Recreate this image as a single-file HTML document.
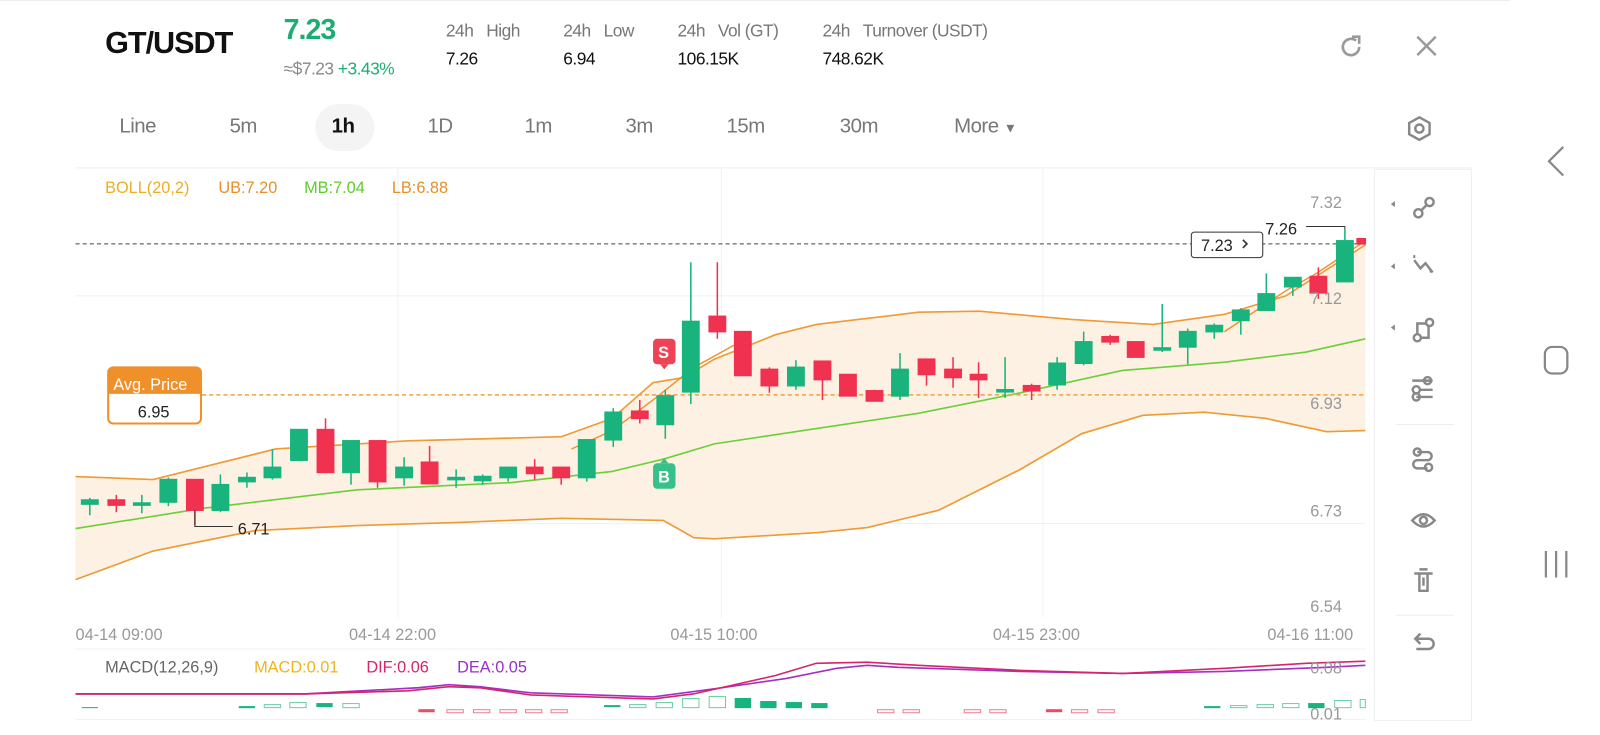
<!DOCTYPE html>
<html><head><meta charset="utf-8"><style>
body{margin:0;width:1600px;height:720px;background:#fff;font-family:"Liberation Sans",sans-serif;overflow:hidden;position:relative}
#w{position:absolute;left:0;top:0;width:1568px;height:706px;transform:scale(1.0204);transform-origin:0 0}
.a{position:absolute;white-space:nowrap}
.lbl{color:#777;font-size:17px;letter-spacing:-0.5px}
.val{color:#111;font-size:17px;letter-spacing:-0.5px}
.tf{position:absolute;top:113px;font-size:20px;color:#777;letter-spacing:-0.5px}
</style></head><body><div id="w">
<div style="position:absolute;left:0;top:0;width:1480px;height:1px;background:#eee"></div>
<div class="a" style="left:103px;top:26px;font-size:30px;font-weight:bold;color:#111;letter-spacing:-1px">GT/USDT</div>
<div class="a" style="left:278px;top:13px;font-size:28px;font-weight:bold;color:#1bae73;letter-spacing:-1px">7.23</div>
<div class="a" style="left:278px;top:58px;font-size:17px;color:#888;letter-spacing:-0.5px">≈$7.23 <span style="color:#1bae73">+3.43%</span></div>
<div class="a lbl" style="left:437px;top:21px">24h&nbsp;&nbsp;&nbsp;High</div>
<div class="a val" style="left:437px;top:48px">7.26</div>
<div class="a lbl" style="left:552px;top:21px">24h&nbsp;&nbsp;&nbsp;Low</div>
<div class="a val" style="left:552px;top:48px">6.94</div>
<div class="a lbl" style="left:664px;top:21px">24h&nbsp;&nbsp;&nbsp;Vol (GT)</div>
<div class="a val" style="left:664px;top:48px">106.15K</div>
<div class="a lbl" style="left:806px;top:21px">24h&nbsp;&nbsp;&nbsp;Turnover (USDT)</div>
<div class="a val" style="left:806px;top:48px">748.62K</div>
<svg class="a" style="left:1310px;top:32px" width="28" height="28" viewBox="0 0 28 28"><path d="M22 14a8 8 0 1 1-3-6.2" fill="none" stroke="#999" stroke-width="2.6"/><path d="M15 4h7v7" fill="none" stroke="#999" stroke-width="2.6"/></svg>
<svg class="a" style="left:1386px;top:33px" width="24" height="24"><path d="M3 3L21 21M21 3L3 21" stroke="#999" stroke-width="2.4"/></svg>
<div style="position:absolute;left:309px;top:102px;width:58px;height:46px;border-radius:23px;background:#f4f4f4"></div>
<div class="tf" style="left:117px">Line</div><div class="tf" style="left:225px">5m</div><div class="tf" style="left:325px;color:#111;font-weight:bold">1h</div><div class="tf" style="left:419px">1D</div><div class="tf" style="left:514px">1m</div><div class="tf" style="left:613px">3m</div><div class="tf" style="left:712px">15m</div><div class="tf" style="left:823px">30m</div><div class="tf" style="left:935px">More <span style="font-size:13px">▼</span></div>
<svg class="a" style="left:1377px;top:112px" width="28" height="28"><path d="M14 3l10 5.5v11L14 25 4 19.5v-11z" fill="none" stroke="#888" stroke-width="2.4"/><circle cx="14" cy="14" r="4" fill="none" stroke="#888" stroke-width="2.4"/></svg>
<svg class="a" style="left:1510px;top:140px" width="30" height="440"><path d="M22 4L8 18l14 14" fill="none" stroke="#888" stroke-width="2.2"/><rect x="4" y="200" width="22" height="26" rx="7" fill="none" stroke="#888" stroke-width="2.2"/><path d="M5 400v26M15 400v26M25 400v26" stroke="#888" stroke-width="2.2"/></svg>
<svg class="a" style="left:0;top:160px" width="1600" height="560">
<rect x="74" y="4" width="1368" height="1" fill="#eee"/>
<rect x="1347" y="6" width="95" height="540" fill="none" stroke="#eee"/>
<g stroke="#f1f1f1"><line x1="74" y1="130" x2="1338" y2="130"/><line x1="74" y1="353" x2="1338" y2="353"/><line x1="390" y1="5" x2="390" y2="445"/><line x1="707" y1="5" x2="707" y2="445"/><line x1="1022" y1="5" x2="1022" y2="445"/><line x1="74" y1="476" x2="1338" y2="476"/><line x1="74" y1="545" x2="1338" y2="545"/></g>
<path d="M74 307L150 310L270 280L400 272L550 268L600 250L640 215L670 210L700 192L760 168L800 158L900 146L960 145L1050 153L1130 158L1200 148L1260 130L1338 80L1338 262L1300 263L1240 250L1180 244L1120 247L1060 265L1000 300L920 340L850 357L800 362L700 368L680 367L650 350L550 348L450 352L350 355L250 360L150 380L74 408Z" fill="#fdf1e4"/>
<path d="M74 307L150 310L270 280L400 272L550 268L600 250L640 215L670 210L700 192L760 168L800 158L900 146L960 145L1050 153L1130 158L1200 148L1260 130L1338 80" fill="none" stroke="#ee9a35" stroke-width="1.6"/>
<path d="M74 408L150 380L250 360L350 355L450 352L550 348L650 350L680 367L700 368L800 362L850 357L920 340L1000 300L1060 265L1120 247L1180 244L1240 250L1300 263L1338 262" fill="none" stroke="#ee9a35" stroke-width="1.6"/>
<path d="M74 358L200 338L350 320L500 313L600 302L650 290L700 275L800 260L900 245L1000 225L1100 203L1200 195L1280 185L1338 172" fill="none" stroke="#6ccf37" stroke-width="1.6"/>
<path d="M560 280L600 262L640 232L680 200L720 178" fill="none" stroke="#f0902a" stroke-width="1.4"/>
<path d="M1200 165L1260 125L1290 108L1338 76" fill="none" stroke="#f0902a" stroke-width="1.4"/>
<line x1="74" y1="79" x2="1338" y2="79" stroke="#444" stroke-dasharray="4 3"/>
<line x1="198" y1="227" x2="1338" y2="227" stroke="#f0a040" stroke-dasharray="4 3" stroke-width="1.4"/>
<g stroke-width="1.5">
<g stroke="#19b37d" fill="#19b37d">
<line x1="88" y1="328" x2="88" y2="345"/><rect x="80" y="330" width="16" height="4"/>
<line x1="139" y1="325" x2="139" y2="343"/><rect x="131" y="333" width="16" height="2"/>
<line x1="165" y1="308" x2="165" y2="336"/><rect x="157" y="310" width="16" height="22"/>
<line x1="216" y1="305" x2="216" y2="342"/><rect x="208" y="315" width="16" height="25"/>
<line x1="242" y1="303" x2="242" y2="318"/><rect x="234" y="308" width="16" height="4"/>
<line x1="267" y1="280" x2="267" y2="310"/><rect x="259" y="298" width="16" height="10"/>
<line x1="293" y1="261" x2="293" y2="291"/><rect x="285" y="261" width="16" height="30"/>
<line x1="344" y1="272" x2="344" y2="315"/><rect x="336" y="272" width="16" height="31"/>
<line x1="396" y1="288" x2="396" y2="316"/><rect x="388" y="298" width="16" height="10"/>
<line x1="447" y1="300" x2="447" y2="318"/><rect x="439" y="308" width="16" height="2"/>
<line x1="473" y1="305" x2="473" y2="315"/><rect x="465" y="307" width="16" height="4"/>
<line x1="498" y1="298" x2="498" y2="312"/><rect x="490" y="298" width="16" height="10"/>
<line x1="575" y1="271" x2="575" y2="312"/><rect x="567" y="271" width="16" height="37"/>
<line x1="601" y1="240" x2="601" y2="278"/><rect x="593" y="244" width="16" height="27"/>
<line x1="652" y1="222" x2="652" y2="270"/><rect x="644" y="228" width="16" height="28"/>
<line x1="677" y1="97" x2="677" y2="236"/><rect x="669" y="155" width="16" height="69"/>
<line x1="780" y1="193" x2="780" y2="222"/><rect x="772" y="200" width="16" height="18"/>
<line x1="882" y1="186" x2="882" y2="232"/><rect x="874" y="202" width="16" height="26"/>
<line x1="985" y1="190" x2="985" y2="230"/><rect x="977" y="222" width="16" height="2"/>
<line x1="1036" y1="190" x2="1036" y2="222"/><rect x="1028" y="196" width="16" height="21"/>
<line x1="1062" y1="165" x2="1062" y2="198"/><rect x="1054" y="175" width="16" height="21"/>
<line x1="1139" y1="138" x2="1139" y2="185"/><rect x="1131" y="181" width="16" height="2"/>
<line x1="1164" y1="162" x2="1164" y2="197"/><rect x="1156" y="165" width="16" height="15"/>
<line x1="1190" y1="157" x2="1190" y2="172"/><rect x="1182" y="159" width="16" height="6"/>
<line x1="1216" y1="142" x2="1216" y2="168"/><rect x="1208" y="144" width="16" height="10"/>
<line x1="1241" y1="108" x2="1241" y2="144"/><rect x="1233" y="128" width="16" height="16"/>
<line x1="1267" y1="112" x2="1267" y2="130"/><rect x="1259" y="112" width="16" height="9"/>
<line x1="1318" y1="65" x2="1318" y2="116"/><rect x="1310" y="76" width="16" height="40"/>
</g>
<g stroke="#f0314f" fill="#f0314f">
<line x1="114" y1="325" x2="114" y2="342"/><rect x="106" y="330" width="16" height="5"/>
<line x1="191" y1="310" x2="191" y2="355"/><rect x="183" y="310" width="16" height="30"/>
<line x1="319" y1="250" x2="319" y2="303"/><rect x="311" y="261" width="16" height="42"/>
<line x1="370" y1="272" x2="370" y2="318"/><rect x="362" y="272" width="16" height="40"/>
<line x1="421" y1="277" x2="421" y2="314"/><rect x="413" y="293" width="16" height="21"/>
<line x1="524" y1="290" x2="524" y2="310"/><rect x="516" y="298" width="16" height="6"/>
<line x1="550" y1="298" x2="550" y2="315"/><rect x="542" y="298" width="16" height="10"/>
<line x1="627" y1="232" x2="627" y2="255"/><rect x="619" y="243" width="16" height="7"/>
<line x1="703" y1="97" x2="703" y2="172"/><rect x="695" y="150" width="16" height="15"/>
<line x1="728" y1="165" x2="728" y2="208"/><rect x="720" y="165" width="16" height="43"/>
<line x1="754" y1="200" x2="754" y2="225"/><rect x="746" y="202" width="16" height="16"/>
<line x1="806" y1="194" x2="806" y2="232"/><rect x="798" y="194" width="16" height="18"/>
<line x1="831" y1="207" x2="831" y2="228"/><rect x="823" y="207" width="16" height="21"/>
<line x1="857" y1="222" x2="857" y2="233"/><rect x="849" y="223" width="16" height="10"/>
<line x1="908" y1="192" x2="908" y2="218"/><rect x="900" y="192" width="16" height="15"/>
<line x1="934" y1="190" x2="934" y2="220"/><rect x="926" y="202" width="16" height="8"/>
<line x1="959" y1="195" x2="959" y2="230"/><rect x="951" y="207" width="16" height="5"/>
<line x1="1011" y1="216" x2="1011" y2="232"/><rect x="1003" y="218" width="16" height="5"/>
<line x1="1088" y1="168" x2="1088" y2="178"/><rect x="1080" y="170" width="16" height="5"/>
<line x1="1113" y1="175" x2="1113" y2="190"/><rect x="1105" y="175" width="16" height="15"/>
<line x1="1292" y1="102" x2="1292" y2="133"/><rect x="1284" y="111" width="16" height="16"/>
<rect x="1330" y="74" width="8" height="5"/>
</g></g>
<path d="M191 340V356H228" fill="none" stroke="#333"/>
<text x="233" y="364" font-size="16" fill="#222">6.71</text>
<path d="M1318 65V62H1280" fill="none" stroke="#333"/>
<text x="1240" y="70" font-size="16" fill="#222">7.26</text>
<rect x="1167.5" y="67.5" width="70" height="25" rx="3" fill="#fff" stroke="#333"/>
<text x="1177" y="86" font-size="16" fill="#222">7.23</text><path d="M1218 75l4 4-4 4" fill="none" stroke="#333" stroke-width="1.6"/>
<rect x="106" y="200" width="91" height="55" rx="5" fill="#fff" stroke="#f0902a" stroke-width="2"/>
<path d="M106 205a5 5 0 0 1 5-5h81a5 5 0 0 1 5 5v21h-91z" fill="#f0902a"/>
<text x="111" y="222" font-size="16" fill="#fff">Avg. Price</text>
<text x="135" y="249" font-size="16" fill="#222">6.95</text>
<rect x="640" y="172" width="22" height="25" rx="4" fill="#ee4356"/><path d="M647 197l4 5 4-5z" fill="#ee4356"/><text x="645" y="191" font-size="16" font-weight="bold" fill="#fff">S</text>
<rect x="640" y="294" width="22" height="25" rx="4" fill="#37c08a"/><path d="M647 294l4-5 4 5z" fill="#37c08a"/><text x="645" y="313" font-size="16" font-weight="bold" fill="#fff">B</text>
<g font-size="16" fill="#999"><text x="1284" y="44">7.32</text><text x="1284" y="138">7.12</text><text x="1284" y="241">6.93</text><text x="1284" y="346">6.73</text><text x="1284" y="440">6.54</text>
<text x="74" y="467">04-14 09:00</text><text x="342" y="467">04-14 22:00</text><text x="657" y="467">04-15 10:00</text><text x="973" y="467">04-15 23:00</text><text x="1242" y="467">04-16 11:00</text></g>
<g font-size="16"><text x="103" y="29" fill="#ecae22">BOLL(20,2)</text><text x="214" y="29" fill="#e5912b">UB:7.20</text><text x="298" y="29" fill="#5fcc2d">MB:7.04</text><text x="384" y="29" fill="#e5912b">LB:6.88</text>
<text x="103" y="499" fill="#666">MACD(12,26,9)</text><text x="249" y="499" fill="#f0b41d">MACD:0.01</text><text x="359" y="499" fill="#d8246a">DIF:0.06</text><text x="448" y="499" fill="#9b2fc9">DEA:0.05</text></g>
<path d="M74 520L300 520L410 514L440 511L470 513L520 519L640 523L700 515L770 505L820 495L850 492L880 494L1000 498L1100 500L1200 498L1300 494L1338 492" fill="none" stroke="#a230c4" stroke-width="1.6"/>
<path d="M74 520L300 520L400 517L440 513L470 514L520 521L640 525L680 520L760 502L800 490L850 489L900 492L1000 497L1100 500L1200 495L1280 490L1338 488" fill="none" stroke="#d8246a" stroke-width="1.6"/>
<text x="1284" y="500" font-size="16" fill="#999">0.08</text><text x="1284" y="545" font-size="16" fill="#999">0.01</text>
<g fill="#19b37d"><rect x="80" y="533" width="16" height="1"/><rect x="234" y="532" width="16" height="2"/><rect x="310" y="529" width="16" height="4"/><rect x="592" y="531" width="16" height="2"/><rect x="720" y="524" width="16" height="10"/><rect x="745" y="527" width="16" height="7"/><rect x="770" y="528" width="16" height="6"/><rect x="795" y="529" width="16" height="5"/><rect x="1180" y="532" width="16" height="2"/><rect x="1282" y="529" width="16" height="5"/></g>
<g fill="none" stroke="#6dcfa5"><rect x="259" y="530.5" width="16" height="3"/><rect x="284" y="528.5" width="16" height="5"/><rect x="336" y="529.5" width="16" height="4"/><rect x="617" y="530.5" width="16" height="3"/><rect x="643" y="528.5" width="16" height="5"/><rect x="669" y="524.5" width="16" height="9"/><rect x="695" y="522.5" width="16" height="11"/><rect x="1206" y="531.5" width="16" height="2"/><rect x="1232" y="530.5" width="16" height="3"/><rect x="1257" y="529.5" width="16" height="4"/><rect x="1308" y="526.5" width="16" height="7"/><rect x="1333" y="525.5" width="5" height="8"/></g>
<g fill="none" stroke="#ef7d92"><rect x="438" y="535.5" width="16" height="3"/><rect x="464" y="535.5" width="16" height="3"/><rect x="490" y="535.5" width="16" height="3"/><rect x="515" y="535.5" width="16" height="3"/><rect x="540" y="535.5" width="16" height="3"/><rect x="860" y="535.5" width="16" height="3"/><rect x="885" y="535.5" width="16" height="3"/><rect x="945" y="535.5" width="16" height="3"/><rect x="970" y="535.5" width="16" height="3"/><rect x="1050" y="535.5" width="16" height="3"/><rect x="1076" y="535.5" width="16" height="3"/></g>
<g fill="#ef4b66"><rect x="410" y="535" width="16" height="3"/><rect x="1025" y="535" width="16" height="3"/></g>
<g transform="translate(1360,0)" fill="none" stroke="#888" stroke-width="2.4">
<path d="M3 40l4-3v6z" fill="#888" stroke="none"/><path d="M3 101l4-3v6z" fill="#888" stroke="none"/><path d="M3 161l4-3v6z" fill="#888" stroke="none"/>
<circle cx="30" cy="49" r="4"/><circle cx="41" cy="38" r="4"/><path d="M33 46l5-5"/>
<path d="M26 95l6 8 5-5 7 9"/><path d="M26 90v3M42 104v3" stroke-width="2"/>
<circle cx="29" cy="171" r="3.5"/><circle cx="41" cy="156" r="3.5"/><path d="M29 167v-10h9M32 171h8v-11"/>
<path d="M24 213h20M32 222h12M28 229h16"/><circle cx="28" cy="222" r="3.5"/><circle cx="39" cy="213" r="3.5"/><circle cx="28" cy="229" r="3.5"/>
<path d="M29 283h10a4 4 0 0 1 0 8H29a4 4 0 0 0 0 8h10"/><circle cx="29" cy="283" r="3.5"/><circle cx="40" cy="298" r="3.5"/>
<path d="M24 350q11-12 22 0q-11 12-22 0z"/><circle cx="35" cy="350" r="3.5"/>
<path d="M26 402h18M31 402v17h8v-17M35 406v8M31 398h8"/>
<path d="M28 466h12a5 5 0 0 1 0 10H28M32 461l-5 5 5 5"/>
</g>
<g stroke="#eee"><line x1="1368" y1="256" x2="1425" y2="256"/><line x1="1368" y1="443" x2="1425" y2="443"/></g>
</svg>
</div></body></html>
